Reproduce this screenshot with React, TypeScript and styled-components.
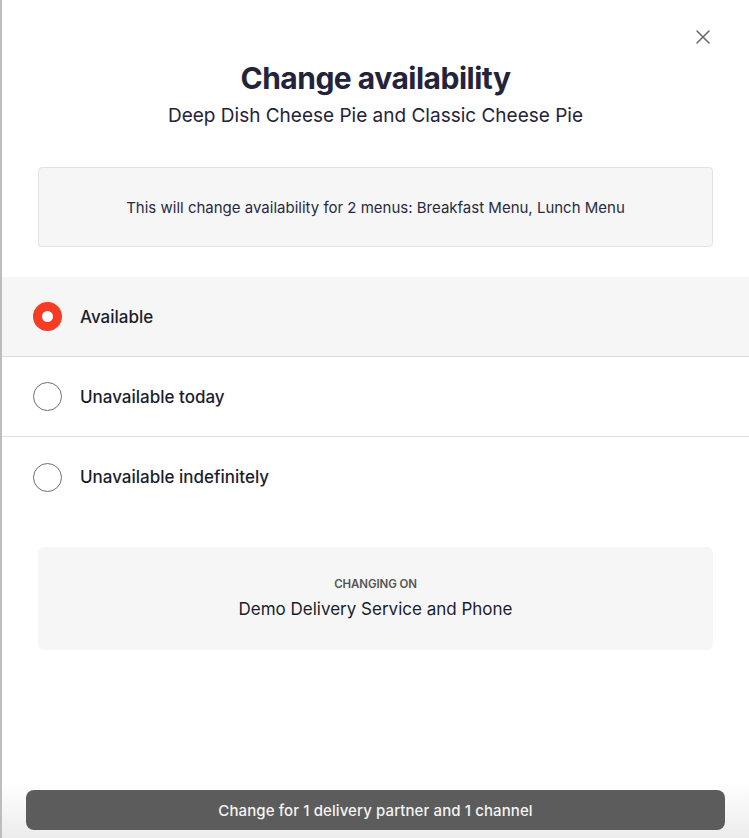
import React, { useState } from "react";
import styled, { createGlobalStyle } from "styled-components";

const Global = createGlobalStyle`
  html, body { margin: 0; padding: 0; }
  body {
    background: #bdbdbd;
    font-family: Inter, "Liberation Sans", sans-serif;
    -webkit-font-smoothing: antialiased;
  }
`;

const Modal = styled.div`
  margin-left: 2px;
  width: 747px;
  height: 838px;
  background: #ffffff;
  display: flex;
  flex-direction: column;
  position: relative;
  box-sizing: border-box;
`;

const CloseButton = styled.button`
  position: absolute;
  top: 28px;
  right: 37px;
  width: 18px;
  height: 18px;
  padding: 0;
  border: none;
  background: none;
  cursor: pointer;
  display: flex;
  align-items: center;
  justify-content: center;
`;

const Header = styled.header`
  display: flex;
  flex-direction: column;
  align-items: center;
  padding-top: 59px;
`;

const Title = styled.h1`
  margin: 0;
  font-size: 30px;
  line-height: 38px;
  font-weight: 700;
  color: #23233b;
  letter-spacing: -0.5px;
`;

const Subtitle = styled.p`
  margin: 7px 0 0;
  font-size: 19px;
  line-height: 24px;
  color: #23233b;
  letter-spacing: 0;
`;

const InfoBox = styled.div`
  margin: 39px 36px 0;
  height: 80px;
  box-sizing: border-box;
  background: #f6f6f6;
  border: 1px solid #e2e2e2;
  border-radius: 4px;
  display: flex;
  align-items: center;
  justify-content: center;
  font-size: 15px;
  color: #2a2a40;
  letter-spacing: 0;
`;

const Options = styled.div`
  margin-top: 30px;
  display: flex;
  flex-direction: column;
`;

const Row = styled.label<{ $selected: boolean; $last: boolean }>`
  height: 80px;
  box-sizing: border-box;
  display: flex;
  align-items: center;
  gap: 18px;
  padding-left: 31px;
  background: ${(p) => (p.$selected ? "#f6f6f6" : "#ffffff")};
  border-bottom: ${(p) => (p.$last ? "none" : "1px solid #dedede")};
  cursor: pointer;
`;

const Radio = styled.span<{ $checked: boolean }>`
  width: 29px;
  height: 29px;
  box-sizing: border-box;
  border-radius: 50%;
  flex: none;
  border: ${(p) => (p.$checked ? "9.5px solid #f63c22" : "1px solid #6f6f6f")};
  background: #ffffff;
`;

const RowLabel = styled.span`
  font-size: 17px;
  font-weight: 500;
  color: #1b1d2e;
  letter-spacing: 0;
`;

const ChannelBox = styled.div`
  margin: 30px 36px 0;
  height: 103px;
  background: #f6f6f6;
  border-radius: 6px;
  display: flex;
  flex-direction: column;
  align-items: center;
  justify-content: center;
  gap: 8px;
`;

const Eyebrow = styled.div`
  font-size: 11.5px;
  font-weight: 600;
  color: #555555;
  letter-spacing: -0.1px;
  text-transform: uppercase;
  margin-top: -2px;
`;

const ChannelText = styled.div`
  font-size: 17px;
  color: #1b1d2e;
  letter-spacing: 0;
`;

const Spacer = styled.div`
  flex: 1;
`;

const Footer = styled.footer`
  padding: 22px 24px 8px;
  background: linear-gradient(to bottom, #ffffff 0%, #ffffff 20%, #ececec 100%);
`;

const SubmitButton = styled.button`
  width: 100%;
  height: 40px;
  border: none;
  border-radius: 8px;
  background: #5c5c5c;
  color: #f4f4f4;
  font-family: Inter, "Liberation Sans", sans-serif;
  font-size: 15px;
  font-weight: 500;
  letter-spacing: 0.1px;
  cursor: pointer;
`;

const options = ["Available", "Unavailable today", "Unavailable indefinitely"];

export default function App() {
  const [selected, setSelected] = useState(0);
  return (
    <>
      <Global />
      <Modal>
        <CloseButton aria-label="Close">
          <svg width="16" height="16" viewBox="0 0 16 16">
            <path d="M2 2L14 14M14 2L2 14" stroke="#666" strokeWidth="1.5" strokeLinecap="round" />
          </svg>
        </CloseButton>
        <Header>
          <Title>Change availability</Title>
          <Subtitle>Deep Dish Cheese Pie and Classic Cheese Pie</Subtitle>
        </Header>
        <InfoBox>This will change availability for 2 menus: Breakfast Menu, Lunch Menu</InfoBox>
        <Options>
          {options.map((o, i) => (
            <Row
              key={o}
              $selected={selected === i}
              $last={i === options.length - 1}
              onClick={() => setSelected(i)}
            >
              <Radio $checked={selected === i} />
              <RowLabel>{o}</RowLabel>
            </Row>
          ))}
        </Options>
        <ChannelBox>
          <Eyebrow>Changing on</Eyebrow>
          <ChannelText>Demo Delivery Service and Phone</ChannelText>
        </ChannelBox>
        <Spacer />
        <Footer>
          <SubmitButton>Change for 1 delivery partner and 1 channel</SubmitButton>
        </Footer>
      </Modal>
    </>
  );
}
